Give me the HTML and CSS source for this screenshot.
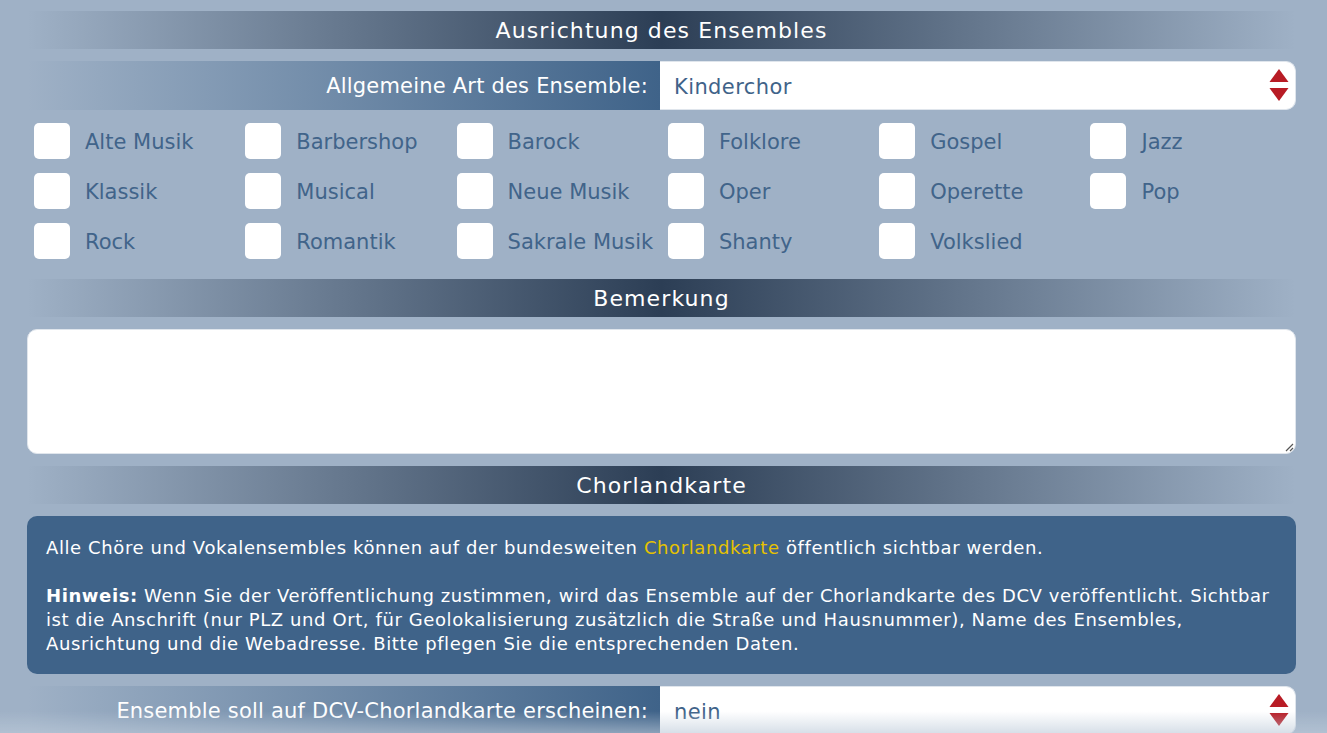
FILE: index.html
```html
<!DOCTYPE html>
<html lang="de">
<head>
<meta charset="utf-8">
<title>Ensemble</title>
<link rel="stylesheet" href="styles.css">
</head>
<body>
<div class="form">
  <div class="section-head">Ausrichtung des Ensembles</div>
  <div class="row">
    <div class="row-label">Allgemeine Art des Ensemble:</div>
    <div class="select">
      <span>Kinderchor</span>
      <svg class="arrows" width="20" height="34" viewBox="0 0 20 34"><path d="M10 0 L19.5 13 L0.5 13 Z" fill="#b81c25"/><path d="M0.5 19 L19.5 19 L10 32 Z" fill="#b81c25"/></svg>
    </div>
  </div>
  <div class="checks">
    <label class="check"><span class="box"></span><span class="txt">Alte Musik</span></label>
    <label class="check"><span class="box"></span><span class="txt">Barbershop</span></label>
    <label class="check"><span class="box"></span><span class="txt">Barock</span></label>
    <label class="check"><span class="box"></span><span class="txt">Folklore</span></label>
    <label class="check"><span class="box"></span><span class="txt">Gospel</span></label>
    <label class="check"><span class="box"></span><span class="txt">Jazz</span></label>
    <label class="check"><span class="box"></span><span class="txt">Klassik</span></label>
    <label class="check"><span class="box"></span><span class="txt">Musical</span></label>
    <label class="check"><span class="box"></span><span class="txt">Neue Musik</span></label>
    <label class="check"><span class="box"></span><span class="txt">Oper</span></label>
    <label class="check"><span class="box"></span><span class="txt">Operette</span></label>
    <label class="check"><span class="box"></span><span class="txt">Pop</span></label>
    <label class="check"><span class="box"></span><span class="txt">Rock</span></label>
    <label class="check"><span class="box"></span><span class="txt">Romantik</span></label>
    <label class="check"><span class="box"></span><span class="txt">Sakrale Musik</span></label>
    <label class="check"><span class="box"></span><span class="txt">Shanty</span></label>
    <label class="check"><span class="box"></span><span class="txt">Volkslied</span></label>
  </div>
  <div class="section-head">Bemerkung</div>
  <div class="textarea">
    <svg class="grip" width="10" height="10" viewBox="0 0 10 10"><path d="M9 2 L2 9 M9 6 L6 9" stroke="#555" stroke-width="1.2"/></svg>
  </div>
  <div class="section-head">Chorlandkarte</div>
  <div class="info">
    <p>Alle Chöre und Vokalensembles können auf der bundesweiten <a class="link">Chorlandkarte</a> öffentlich sichtbar werden.</p>
    <p><b>Hinweis:</b> Wenn Sie der Veröffentlichung zustimmen, wird das Ensemble auf der Chorlandkarte des DCV veröffentlicht. Sichtbar ist die Anschrift (nur PLZ und Ort, für Geolokalisierung zusätzlich die Straße und Hausnummer), Name des Ensembles, Ausrichtung und die Webadresse. Bitte pflegen Sie die entsprechenden Daten.</p>
  </div>
  <div class="row">
    <div class="row-label">Ensemble soll auf DCV-Chorlandkarte erscheinen:</div>
    <div class="select">
      <span>nein</span>
      <svg class="arrows" width="20" height="34" viewBox="0 0 20 34"><path d="M10 0 L19.5 13 L0.5 13 Z" fill="#b81c25"/><path d="M0.5 19 L19.5 19 L10 32 Z" fill="#b81c25"/></svg>
    </div>
  </div>
</div>
<div class="bottom-fade"></div>
</body>
</html>
```
FILE: styles.css
```css
html, body {
  margin: 0;
  padding: 0;
}
body {
  background: #9fb1c6;
  font-family: "DejaVu Sans", "Open Sans", sans-serif;
  overflow: hidden;
}
.form {
  padding: 11px 31px 0 27px;
}
.section-head {
  box-sizing: border-box;
  height: 38px;
  padding-top: 2px;
  line-height: 36px;
  text-align: center;
  color: #fff;
  font-size: 22px;
  letter-spacing: 1.1px;
  background: linear-gradient(to right, rgba(44, 62, 85, 0) 0%, #2c3e55 50%, rgba(44, 62, 85, 0) 100%);
  margin-bottom: 12px;
}
.row {
  display: flex;
  height: 49px;
}
.row-label {
  flex: 0 0 633px;
  box-sizing: border-box;
  padding: 2px 12px 0 0;
  text-align: right;
  line-height: 47px;
  color: #fff;
  font-size: 21px;
  letter-spacing: 0.2px;
  background: linear-gradient(to right, rgba(63, 99, 137, 0) 0%, #3f6389 100%);
}
.select {
  flex: 1;
  display: flex;
  align-items: center;
  justify-content: space-between;
  background: #fff;
  border: 1px solid #dfe5ec;
  border-left: none;
  border-radius: 0 10px 10px 0;
  padding: 0 6px 0 14px;
  color: #3f6389;
  font-size: 21px;
  letter-spacing: 0.4px;
}
.select span {
  padding-top: 2px;
}
.arrows {
  display: block;
}
.checks {
  display: grid;
  grid-template-columns: repeat(6, 211.3px);
  row-gap: 14px;
  padding: 13px 0 0 7px;
  margin-bottom: 20px;
}
.check {
  display: flex;
  align-items: center;
  height: 36px;
  color: #41648a;
  font-size: 21px;
  white-space: nowrap;
}
.txt {
  padding-top: 2px;
}
.box {
  width: 36px;
  height: 36px;
  border-radius: 5px;
  background: #fff;
  margin-right: 15px;
  flex: none;
}
.textarea {
  position: relative;
  height: 125px;
  box-sizing: border-box;
  background: #fff;
  border: 1px solid #dfe5ec;
  border-radius: 10px;
  margin-top: 1px;
  margin-bottom: 12px;
}
.grip {
  position: absolute;
  right: 1px;
  bottom: 1px;
}
.info {
  margin-top: 1px;
  background: #3f6389;
  border-radius: 10px;
  padding: 20px 19px 18px;
  color: #fff;
  font-size: 18px;
  letter-spacing: 0.6px;
  line-height: 24px;
  margin-bottom: 12px;
}
.info p {
  margin: 0;
}
.info p + p {
  margin-top: 24px;
}
.link {
  color: #e6c200;
}
.bottom-fade {
  position: fixed;
  left: 0;
  right: 0;
  bottom: 0;
  height: 22px;
  background: linear-gradient(to bottom, rgba(190, 203, 218, 0), rgba(190, 203, 218, 0.6));
  pointer-events: none;
}
```
